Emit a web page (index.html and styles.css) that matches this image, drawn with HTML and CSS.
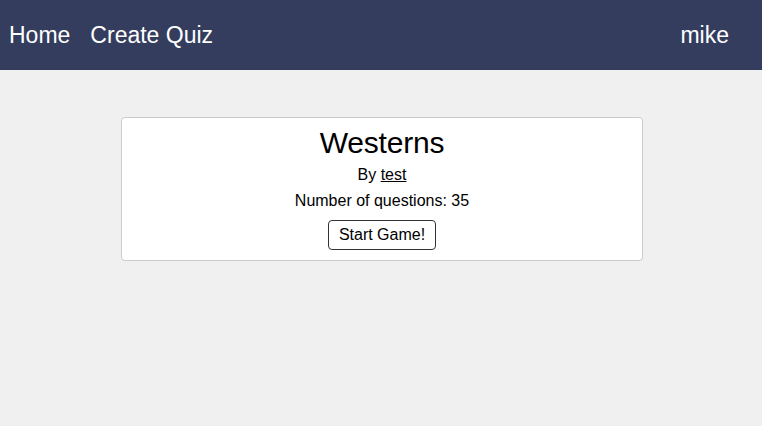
FILE: index.html
```html
<!DOCTYPE html>
<html>
<head>
<meta charset="utf-8">
<link rel="stylesheet" href="styles.css">
</head>
<body>
<nav class="navbar">
  <div class="nav-left">
    <a class="nav-link" href="#">Home</a>
    <a class="nav-link" href="#">Create Quiz</a>
  </div>
  <a class="nav-link" href="#">mike</a>
</nav>
<main class="content">
  <section class="quiz-card">
    <h1 class="quiz-title">Westerns</h1>
    <p class="quiz-line quiz-author">By <a class="author-link" href="#">test</a></p>
    <p class="quiz-line">Number of questions: 35</p>
    <button class="start-btn">Start Game!</button>
  </section>
</main>
</body>
</html>
```

FILE: styles.css
```css
html, body {
  margin: 0;
  padding: 0;
  height: 100%;
}
body {
  background: #f0f0f0;
  font-family: "Liberation Sans", Arial, sans-serif;
  color: #000;
}
.navbar {
  height: 70px;
  background: #343d5e;
  display: flex;
  align-items: center;
  justify-content: space-between;
  padding: 0 33px 0 9px;
}
.nav-left {
  display: flex;
  gap: 20px;
}
.nav-link {
  color: #fff;
  text-decoration: none;
  font-size: 23px;
  line-height: 28px;
}
.content {
  display: flex;
  justify-content: center;
  padding: 47px 0 0 2px;
}
.quiz-card {
  width: 520px;
  background: #fff;
  border: 1px solid #cccccc;
  border-radius: 4px;
  display: flex;
  flex-direction: column;
  align-items: center;
  padding: 8px 0 10px;
}
.quiz-title {
  margin: 0;
  font-size: 30px;
  font-weight: normal;
  line-height: 34px;
  letter-spacing: -0.2px;
}
.quiz-line {
  margin: 0;
  font-size: 16px;
  line-height: 26px;
}
.quiz-author {
  margin-top: 2px;
}
.author-link {
  color: #000;
  text-decoration: underline;
}
.start-btn {
  margin-top: 6px;
  font-family: "Liberation Sans", Arial, sans-serif;
  font-size: 16px;
  line-height: 18px;
  padding: 5px 10px;
  background: #fff;
  color: #000;
  border: 1px solid #333;
  border-radius: 4px;
}
```
